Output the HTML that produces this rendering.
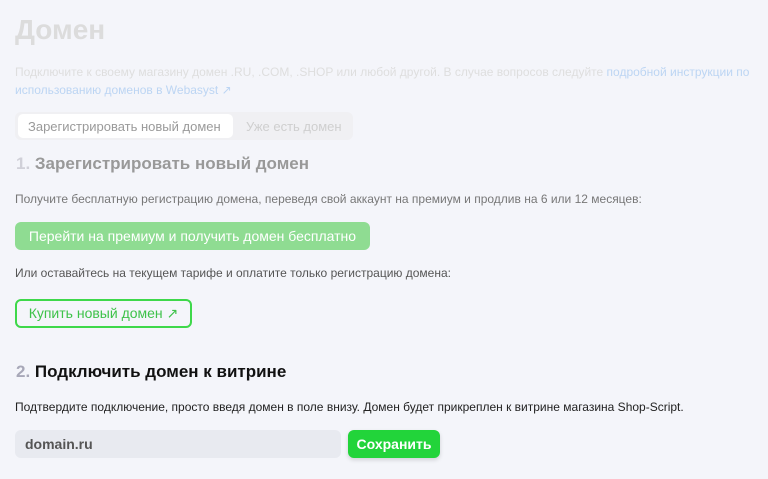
<!DOCTYPE html>
<html><head><meta charset="utf-8"><style>
body{margin:0;width:768px;height:479px;overflow:hidden;background:#f4f5fa;font-family:"Liberation Sans","DejaVu Sans",sans-serif;position:relative}
.a{position:absolute;white-space:nowrap}
</style></head><body>
<div class="a" style="left:15px;top:14px;font-size:28px;font-weight:bold;color:#dcdcdc">Домен</div>
<div class="a" style="left:15px;top:63px;font-size:12px;color:#dedede;line-height:18px">Подключите к своему магазину домен .RU, .COM, .SHOP или любой другой. В случае вопросов следуйте <span style="color:#bcd5f3">подробной инструкции по</span><br><span style="color:#bcd5f3">использованию доменов в Webasyst ↗</span></div>
<div class="a" style="left:15px;top:112px;width:338px;height:28px;background:#f0f0f3;border-radius:6px"></div>
<div class="a" style="left:18px;top:114px;width:215px;height:24px;background:#fff;border-radius:5px"></div>
<div class="a" style="left:28px;top:119px;font-size:13px;color:#9a9a9a">Зарегистрировать новый домен</div>
<div class="a" style="left:246px;top:119px;font-size:13px;color:#cfcfcf">Уже есть домен</div>
<div class="a" style="left:16px;top:154px;font-size:17px;font-weight:bold;color:#999"><span style="color:#d0d0d8">1.</span> Зарегистрировать новый домен</div>
<div class="a" style="left:15px;top:192px;font-size:12px;color:#777">Получите бесплатную регистрацию домена, переведя свой аккаунт на премиум и продлив на 6 или 12 месяцев:</div>
<div class="a" style="left:15px;top:222px;width:355px;height:28px;background:#8fdc92;border-radius:6px;color:#fff;font-size:14px;line-height:28px;text-align:center">Перейти на премиум и получить домен бесплатно</div>
<div class="a" style="left:15px;top:266px;font-size:12px;color:#555">Или оставайтесь на текущем тарифе и оплатите только регистрацию домена:</div>
<div class="a" style="left:15px;top:299px;width:173px;height:25px;border:2px solid #3ed84a;border-radius:6px;color:#3ec24a;font-size:14px;line-height:25px;text-align:center">Купить новый домен ↗</div>
<div class="a" style="left:16px;top:362px;font-size:17px;font-weight:bold;color:#111"><span style="color:#a8a8b8">2.</span> Подключить домен к витрине</div>
<div class="a" style="left:15px;top:400px;font-size:12px;color:#222">Подтвердите подключение, просто введя домен в поле внизу. Домен будет прикреплен к витрине магазина Shop-Script.</div>
<div class="a" style="left:15px;top:430px;width:326px;height:28px;background:#e8eaf0;border-radius:6px;font-size:14px;font-weight:bold;color:#555;line-height:28px;box-sizing:border-box;padding-left:10px">domain.ru</div>
<div class="a" style="left:348px;top:430px;width:92px;height:28px;background:#22d43a;border-radius:6px;color:#fff;font-size:14px;font-weight:bold;line-height:28px;text-align:center;box-shadow:0 2px 4px rgba(0,0,0,.15)">Сохранить</div>
</body></html>
